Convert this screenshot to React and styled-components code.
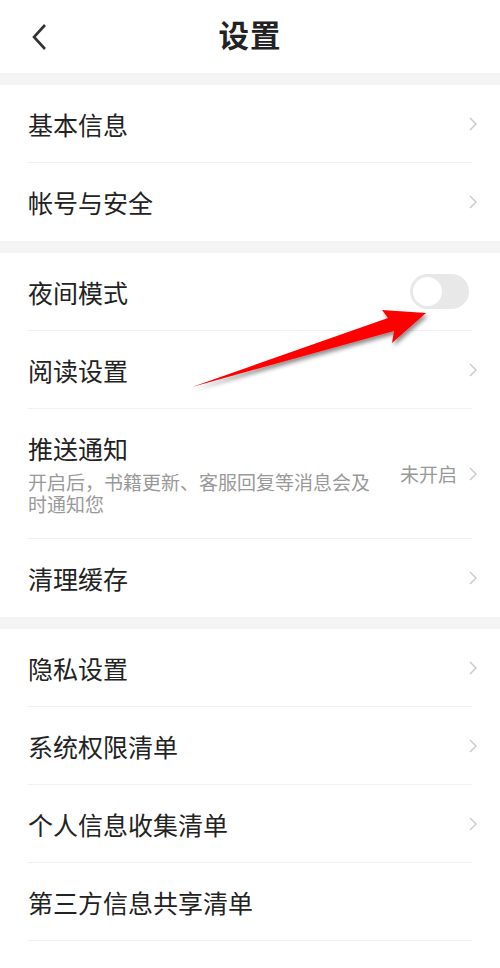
import React from "react";
import styled, { createGlobalStyle } from "styled-components";

const Global = createGlobalStyle`
  html, body { margin: 0; padding: 0; background: #fff; }
  body { font-family: "Noto Sans CJK SC", "Noto Sans", sans-serif; }
`;

const Page = styled.div`
  position: relative;
  width: 500px;
  min-height: 968px;
  background: #fff;
  overflow: hidden;
`;

const Header = styled.header`
  height: 73px;
  display: flex;
  align-items: center;
  justify-content: center;
  position: relative;
`;

const Back = styled.button`
  position: absolute;
  left: 26px;
  top: 22px;
  width: 28px;
  height: 30px;
  border: 0;
  background: none;
  padding: 0;
  display: flex;
  align-items: center;
  justify-content: center;
`;

const Title = styled.h1`
  margin: 0;
  font-size: 30.5px;
  font-weight: 700;
  color: #222;
  letter-spacing: 1px;
  line-height: 1;
  margin-top: -4px;
`;

const Gap = styled.div`
  height: 12px;
  background: #f4f4f4;
`;

const Section = styled.section`
  padding: 0 28px;
`;

const Row = styled.div`
  display: flex;
  align-items: center;
  height: ${(p) => p.$h || 78}px;
  box-sizing: border-box;
  border-bottom: ${(p) => (p.$last ? "none" : "1px solid #f0f0f0")};
  gap: 12px;
`;

const Main = styled.div`
  flex: 1;
  display: flex;
  flex-direction: column;
  justify-content: center;
  gap: 8px;
`;

const Label = styled.span`
  font-size: 25px;
  color: #222;
  line-height: 30px;
`;

const Sub = styled.span`
  font-size: 19px;
  color: #999;
  line-height: 22px;
  padding-right: 10px;
`;

const Value = styled.span`
  font-size: 19px;
  color: #999;
  white-space: nowrap;
`;

const Right = styled.div`
  display: flex;
  align-items: center;
  gap: 11px;
  margin-right: -6px;
`;

const Toggle = styled.div`
  width: 59px;
  height: 35px;
  border-radius: 18px;
  background: #e8e8e8;
  position: relative;
  margin-right: 3px;
  &::after {
    content: "";
    position: absolute;
    left: 3px;
    top: 3px;
    width: 29px;
    height: 29px;
    border-radius: 50%;
    background: #fff;
  }
`;

const Arrow = styled.svg`
  position: absolute;
  left: 0;
  top: 0;
  pointer-events: none;
`;

const Chevron = () => (
  <svg width="10" height="14" viewBox="0 0 10 14">
    <path d="M2 1 L8 7 L2 13" fill="none" stroke="#c8c8c8" strokeWidth="1.4" />
  </svg>
);

const Item = ({ label, sub, value, toggle, last, nochev }) => (
  <Row $last={last} $h={sub ? 130 : 78}>
    <Main>
      <Label>{label}</Label>
      {sub && <Sub>{sub}</Sub>}
    </Main>
    {toggle ? (
      <Toggle />
    ) : (
      <Right>
        {value && <Value>{value}</Value>}
        {!nochev && <Chevron />}
      </Right>
    )}
  </Row>
);

export default function App() {
  return (
    <Page>
      <Global />
      <Header>
        <Back aria-label="返回">
          <svg width="18" height="28" viewBox="0 0 18 28">
            <path d="M14 2 L3 14 L14 26" fill="none" stroke="#333" strokeWidth="2.6" />
          </svg>
        </Back>
        <Title>设置</Title>
      </Header>
      <Gap />
      <Section>
        <Item label="基本信息" />
        <Item label="帐号与安全" last />
      </Section>
      <Gap />
      <Section>
        <Item label="夜间模式" toggle />
        <Item label="阅读设置" />
        <Item
          label="推送通知"
          sub="开启后，书籍更新、客服回复等消息会及时通知您"
          value="未开启"
        />
        <Item label="清理缓存" last />
      </Section>
      <Gap />
      <Section>
        <Item label="隐私设置" />
        <Item label="系统权限清单" />
        <Item label="个人信息收集清单" />
        <Item label="第三方信息共享清单" nochev />
      </Section>
      <Arrow width="500" height="968" viewBox="0 0 500 968">
        <defs>
          <filter id="sh" x="-20%" y="-20%" width="140%" height="140%">
            <feDropShadow dx="2" dy="3" stdDeviation="2" floodColor="#000" floodOpacity="0.45" />
          </filter>
        </defs>
        <polygon
          points="192,387 388,318 382,310 426,313 392,343 394,331"
          fill="#ff0000"
          filter="url(#sh)"
        />
      </Arrow>
    </Page>
  );
}
